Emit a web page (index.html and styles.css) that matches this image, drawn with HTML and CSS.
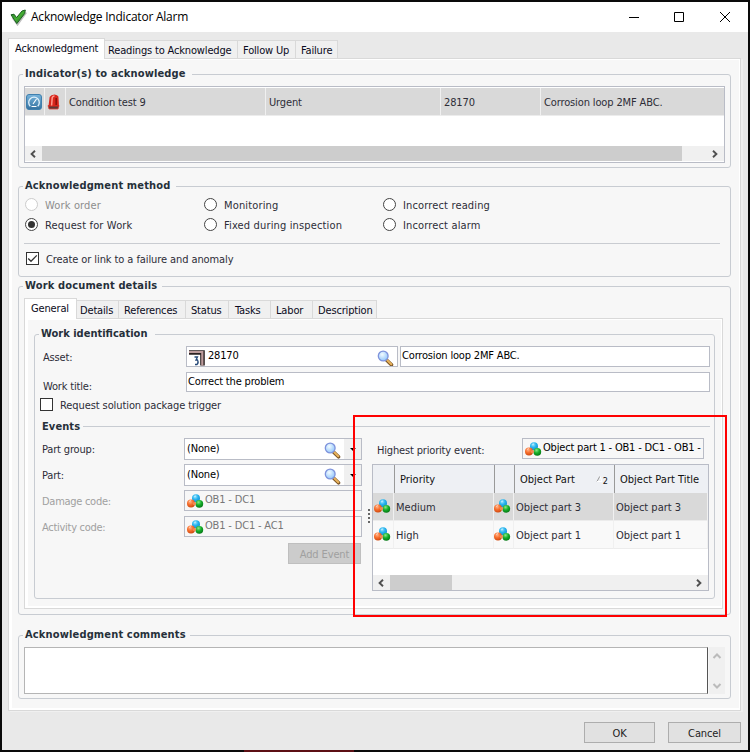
FILE: index.html
```html
<!DOCTYPE html>
<html lang="en">
<head>
<meta charset="utf-8">
<title>Acknowledge Indicator Alarm</title>
<link rel="stylesheet" href="styles.css">
</head>
<body>
<svg class="defs" width="0" height="0">
  <defs>
    <radialGradient id="gO" cx=".4" cy=".3" r=".7"><stop offset="0" stop-color="#ffb48a"/><stop offset=".5" stop-color="#f8702e"/><stop offset="1" stop-color="#d04a10"/></radialGradient>
    <radialGradient id="gB" cx=".4" cy=".3" r=".7"><stop offset="0" stop-color="#9be4ff"/><stop offset=".5" stop-color="#27b4ee"/><stop offset="1" stop-color="#1590d4"/></radialGradient>
    <radialGradient id="gG" cx=".4" cy=".3" r=".7"><stop offset="0" stop-color="#8be88a"/><stop offset=".5" stop-color="#16b02a"/><stop offset="1" stop-color="#067a16"/></radialGradient>
    <radialGradient id="gL" cx=".4" cy=".35" r=".7"><stop offset="0" stop-color="#f2fbff"/><stop offset="1" stop-color="#8cc3fb"/></radialGradient>
    <linearGradient id="gGauge" x2="0" y2="1"><stop offset="0" stop-color="#78b4dc"/><stop offset="1" stop-color="#34719f"/></linearGradient>
    <linearGradient id="gCheck" x2="1" y2="1"><stop offset="0" stop-color="#1f7a28"/><stop offset=".5" stop-color="#46b034"/><stop offset="1" stop-color="#14581c"/></linearGradient>
    <symbol id="parts" viewBox="0 0 17 15">
      <circle cx="9" cy="4.3" r="4" fill="url(#gB)"/>
      <circle cx="12.300" cy="9.800" r="3.900" fill="url(#gG)"/>
      <circle cx="4" cy="9.400" r="4" fill="url(#gO)"/>
      <circle cx="7.400" cy="9.600" r="1.700" fill="#f08a54"/>
      <path d="M2 7.600l2-1.300M7 3l2-1.200" stroke="#fff" stroke-opacity=".6" stroke-width=".8"/>
    </symbol>
    <symbol id="lens" viewBox="0 0 17 17">
      <path d="M10 10.500l4.500 4.300" stroke="#7a5425" stroke-width="3.600" stroke-linecap="round"/>
      <path d="M10.300 10.200l4 4" stroke="#e9b35c" stroke-width="2" stroke-linecap="round"/>
      <circle cx="6.200" cy="6" r="4.900" fill="url(#gL)" stroke="#7f93dc" stroke-width="1.300"/>
    </symbol>
    <symbol id="left" viewBox="0 0 8 8"><path d="M6 .8L2.600 4L6 7.200" fill="none" stroke="#505050" stroke-width="1.900"/></symbol>
    <symbol id="right" viewBox="0 0 8 8"><path d="M2 .8L5.400 4L2 7.200" fill="none" stroke="#505050" stroke-width="1.900"/></symbol>
  </defs>
</svg>

<div class="window">
  <header class="titlebar">
    <svg class="logo" width="17" height="17" viewBox="0 0 17 17"><path d="M2.500 8.500l5 7L16.200 3.500" fill="none" stroke="#888" stroke-opacity=".55" stroke-width="2"/><path d="M1 5.800L4 5.200L6.600 8.600L12 2L15.300 1L14.600 4.600L6.800 14.600Z" fill="url(#gCheck)" stroke="#1b5e20" stroke-width="1"/></svg>
    <h1>Acknowledge Indicator Alarm</h1>
    <svg class="controls" width="104" height="12" viewBox="0 0 104 12"><path d="M1 6.500h10M46.500 1.500h9v9h-9zM92 1l10 10M102 1L92 11" fill="none" stroke="#000"/></svg>
  </header>

  <nav class="tabs main-tabs">
    <span class="tab active t-ack">Acknowledgment</span><span class="tab t-read">Readings to Acknowledge</span><span class="tab t-follow">Follow Up</span><span class="tab t-fail">Failure</span>
  </nav>

  <main class="page">
    <fieldset class="group g-ind">
      <legend class="l-ind">Indicator(s) to acknowledge</legend>
      <div class="grid ind-grid">
        <div class="row selected ind-row">
          <span class="cell ic"><svg width="16" height="16" viewBox="0 0 16 16"><rect x=".5" y=".5" width="15" height="15" rx="2.500" fill="url(#gGauge)" stroke="#3f7fae"/><path d="M4.300 12.200A5.300 5.300 0 1 1 11.700 12.200" fill="none" stroke="#dff0fb" stroke-width="1.300"/><path d="M7 10L10.500 5M5.500 12.500h5" stroke="#fff" stroke-width="1.100"/></svg></span>
          <span class="cell ic"><svg width="14" height="16" viewBox="0 0 14 16"><path d="M1 11.500h11l-1 3.500h-9z" fill="#5a3a38" stroke="#e04038" stroke-width=".8"/><path d="M1.500 12.500L2.600 3Q4 .4 7.500 .4Q10.600 .6 11.400 2.600L12 12.500Z" fill="#d8261c"/><path d="M4.600 11.500L5.200 3.600Q6 2 7.500 2" stroke="#ff9a8e" stroke-width="1.500" fill="none"/><path d="M9.200 4v7" stroke="#8c100a" stroke-width="1.600"/></svg></span>
          <span class="cell">Condition test 9</span><span class="cell">Urgent</span><span class="cell">28170</span><span class="cell">Corrosion loop 2MF ABC.</span>
        </div>
        <div class="spacer"></div>
        <div class="hscroll"><svg width="8" height="8"><use href="#left"/></svg><i class="thumb"></i><svg width="8" height="8"><use href="#right"/></svg></div>
      </div>
    </fieldset>

    <fieldset class="group g-method">
      <legend class="l-method">Acknowledgment method</legend>
      <div class="radios">
        <label class="off"><i class="radio"></i><span>Work order</span></label>
        <label><i class="radio"></i><span>Monitoring</span></label>
        <label><i class="radio"></i><span>Incorrect reading</span></label>
        <label><i class="radio on"></i><span>Request for Work</span></label>
        <label><i class="radio"></i><span>Fixed during inspection</span></label>
        <label><i class="radio"></i><span>Incorrect alarm</span></label>
      </div>
      <div class="rule"></div>
      <label class="check"><i class="box"><svg width="11" height="11" viewBox="0 0 11 11"><path d="M1.200 5.500L4 8.300L9.800 2.400" fill="none" stroke="#333" stroke-width="1.300"/></svg></i><span>Create or link to a failure and anomaly</span></label>
    </fieldset>

    <fieldset class="group g-doc">
      <legend class="l-doc">Work document details</legend>
      <nav class="tabs doc-tabs">
        <span class="tab active d1">General</span><span class="tab d2">Details</span><span class="tab d3">References</span><span class="tab d4">Status</span><span class="tab d5">Tasks</span><span class="tab d6">Labor</span><span class="tab d7">Description</span>
      </nav>
      <div class="page doc-page">
        <fieldset class="group g-work">
          <legend class="l-work">Work identification</legend>
          <div class="line asset">
            <span class="lab">Asset:</span>
            <span class="field f-asset"><svg width="17" height="17" viewBox="0 0 17 17"><path d="M0 3.500h13.500v13" fill="none" stroke="#2b2222" stroke-width="4.600"/><path d="M0 3h13.300v13.500" fill="none" stroke="#bd9c9c" stroke-width="2.200"/><path d="M5.500 8h3l-1.500 3h1.500q1.500 3-.5 4.500H6" fill="none" stroke="#274a78" stroke-width="1.300"/></svg><b>28170</b><svg class="end" width="17" height="17"><use href="#lens"/></svg></span>
            <span class="field f-desc">Corrosion loop 2MF ABC.</span>
          </div>
          <div class="line title"><span class="lab">Work title:</span><span class="field f-title">Correct the problem</span></div>
          <label class="check c-req"><i class="box"></i><span>Request solution package trigger</span></label>
          <div class="subhead"><h2>Events</h2><i></i></div>
          <div class="events">
            <div class="left">
              <div class="line"><span class="lab">Part group:</span><span class="field combo">(None)<svg class="end" width="17" height="17"><use href="#lens"/></svg><i class="drop"></i></span></div>
              <div class="line"><span class="lab">Part:</span><span class="field combo">(None)<svg class="end" width="17" height="17"><use href="#lens"/></svg><i class="drop"></i></span></div>
              <div class="line off"><span class="lab">Damage code:</span><span class="field ro"><svg width="17" height="15"><use href="#parts"/></svg><b>OB1 - DC1</b></span></div>
              <div class="line off"><span class="lab">Activity code:</span><span class="field ro"><svg width="17" height="15"><use href="#parts"/></svg><b>OB1 - DC1 - AC1</b></span></div>
              <button class="btn add" disabled>Add Event</button>
            </div>
            <div class="splitter"><i></i><i></i><i></i><i></i></div>
            <div class="right">
              <div class="highest"><span>Highest priority event:</span><span class="field f-high"><svg width="17" height="15"><use href="#parts"/></svg><b>Object part 1 - OB1 - DC1 - OB1 -</b></span></div>
              <div class="grid ev-grid">
                <div class="row head"><span></span><span>Priority</span><span></span><span>Object Part<svg class="sort" width="7" height="9" viewBox="0 0 7 9"><path d="M1 6.500L4 1" stroke="#999" fill="none"/><path d="M4 1L6 6.500H1" stroke="#fff" fill="none"/></svg><small>2</small></span><span>Object Part Title</span></div>
                <div class="row selected"><span class="cell ic"><svg width="17" height="15"><use href="#parts"/></svg></span><span class="cell">Medium</span><span class="cell ic"><svg width="17" height="15"><use href="#parts"/></svg></span><span class="cell">Object part 3</span><span class="cell">Object part 3</span></div>
                <div class="row alt"><span class="cell ic"><svg width="17" height="15"><use href="#parts"/></svg></span><span class="cell">High</span><span class="cell ic"><svg width="17" height="15"><use href="#parts"/></svg></span><span class="cell">Object part 1</span><span class="cell">Object part 1</span></div>
                <div class="spacer"></div>
                <div class="hscroll"><svg width="8" height="8"><use href="#left"/></svg><i class="thumb"></i><svg width="8" height="8"><use href="#right"/></svg></div>
              </div>
            </div>
          </div>
        </fieldset>
      </div>
    </fieldset>

    <fieldset class="group g-com">
      <legend class="l-com">Acknowledgment comments</legend>
      <div class="comments"><div class="memo"></div><div class="vscroll"><svg width="10" height="8" viewBox="0 0 10 8"><path d="M1.500 6L5 2.500L8.500 6" fill="none" stroke="#bbb" stroke-width="2"/></svg><svg width="10" height="8" viewBox="0 0 10 8"><path d="M1.500 2L5 5.500L8.500 2" fill="none" stroke="#bbb" stroke-width="2"/></svg></div></div>
    </fieldset>
  </main>

  <footer class="footer"><button class="btn ok">OK</button><button class="btn cancel">Cancel</button></footer>
</div>
<div class="highlight"></div>
</body>
</html>
```
FILE: styles.css
```css
* { box-sizing: border-box; }
html { background: #0a0a0a; }
body {
  margin: 0; width: 750px; height: 752px; padding: 2px; position: relative; overflow: hidden;
  background: linear-gradient(90deg, transparent 244px, #5c0f14 244px, #5c0f14 354px, transparent 354px) 0 100% / 100% 2px no-repeat;
  font: 11px/14px "DejaVu Sans Condensed", "DejaVu Sans", sans-serif; font-stretch: condensed;
  letter-spacing: -.13px;
  color: #2d2d37;
}
.defs { position: absolute; }
svg { display: block; flex: none; }
i { font-style: normal; display: block; }
b { font-weight: normal; }
.window { width: 746px; height: 748px; background: #e9e9e9; display: flex; flex-direction: column; }
.titlebar { height: 30px; background: #fff; display: flex; align-items: center; padding: 0 16px 0 8px; }
.titlebar h1 { margin: 0 0 0 4px; font: 12px/16px "Open Sans", "Noto Sans", sans-serif; letter-spacing: -.23px; color: #000; }
.controls { margin-left: auto; }

.tabs { display: flex; align-items: flex-end; color: #0a0a20; white-space: nowrap; letter-spacing: -.16px; }
.tab { height: 18px; background: #f0f0f0; border: 1px solid #d9d9d9; border-left: 0; border-bottom: 0; padding: 3px 0 0 3px; }
.tab.active { height: 21px; margin-bottom: -1px; background: #fff; border-left: 1px solid #d9d9d9; padding: 3px 0 0 6px; z-index: 1; }
.main-tabs { height: 26px; margin-left: 6px; }
.t-ack { width: 97px; } .t-read { width: 133px; } .t-follow { width: 58px; padding-left: 5px; } .t-fail { width: 42px; padding-left: 5px; }
.page { background: #f7f7f7; border: 1px solid #d9d9d9; box-shadow: inset 3px 0 #fff, inset 0 1px #fff, inset -1px -2px #fff; }
main.page { width: 733px; height: 653px; margin-left: 6px; padding: 8px 9px 0 9px; box-shadow: inset 3px 0 #fff, inset 0 1px #fff, inset -1px -2px #fff, 2px 1px #f0f0f0; }

.group { border: 1px solid #c8ccd2; border-radius: 3px; margin: 0; padding: 0 0 0 5px; min-width: 0; }
legend { font-weight: bold; line-height: 14px; padding: 0 0 0 2px; margin-left: -1px; color: #26303a; white-space: nowrap; height: 14px; letter-spacing: .15px; }
.g-ind { height: 101px; } .g-method { height: 98px; margin-top: 11px; } .g-doc { height: 336px; margin-top: 2px; } .g-com { height: 71px; margin-top: 13px; }
.l-ind { width: 169px; } .l-method { width: 153px; } .l-doc { width: 139px; } .l-work { width: 116px; } .l-com { width: 167px; }
.l-work { letter-spacing: 0; }

.grid { border: 1px solid #b9bcc6; background: #fff; display: flex; flex-direction: column; }
.spacer { flex: 1; }
.row { display: grid; height: 28px; white-space: nowrap; }
.selected { background: #d9d9d9; }
.alt { background: #f9f9f9; }
.cell { border-right: 1px solid #f0f0f0; border-bottom: 1px solid #ececec; padding: 8px 0 0 3px; overflow: hidden; }
.cell.ic { padding: 6px 0 0 1px; }
.ind-grid { width: 701px; height: 77px; margin-top: 5px; padding-top: 1px; }
.ind-row { grid-template-columns: 20px 21px 200px 175px 100px 1fr; }
.ind-row .cell:last-child { border-right: 0; }
.ind-row .cell.ic + .ic { padding-left: 2px; }
.hscroll { height: 15px; background: #f0f0f0; display: flex; align-items: center; padding: 0 5px 0 4px; }
.ind-grid .hscroll { margin-bottom: 1px; }
.hscroll svg:last-child { margin-left: auto; }
.thumb { height: 15px; background: #cdcdcd; margin-left: 5px; width: 640px; }

.radios { display: grid; grid-template-columns: 179px 179px 1fr; grid-auto-rows: 20px; margin-top: 2px; padding-left: 1px; letter-spacing: .15px; }
.radios label { display: flex; align-items: flex-start; padding-top: 3px; gap: 7px; }
.radios span, .check span { padding-top: 1px; }
.radio { width: 13px; height: 13px; border: 1px solid #444; border-radius: 50%; background: #fff; display: grid; place-items: center; }
.on::after { content: ""; width: 7px; height: 7px; border-radius: 50%; background: #333; }
.off { color: #8d8d8d; }
.off .radio { border-color: #ccc; }
.rule { height: 1px; width: 696px; background: #c9ccd1; margin-top: 8px; }
.check { display: flex; align-items: flex-start; gap: 7px; margin: 8px 0 0 2px; height: 13px; letter-spacing: -.09px; }
.box { width: 13px; height: 13px; border: 1px solid #333; background: #fff; }

.doc-tabs { height: 25px; }
.d1 { width: 53px; } .d2 { width: 42px; } .d3 { width: 67px; padding-left: 5px; } .d4 { width: 43px; padding-left: 5px; } .d5 { width: 42px; padding-left: 6px; } .d6 { width: 42px; padding-left: 5px; } .d7 { width: 64px; padding-left: 5px; }
.doc-page { width: 699px; height: 291px; padding: 8px 8px 8px 9px; }
.g-work { width: 681px; height: 272px; padding: 0 4px 0 5px; }
.line { display: flex; }
.lab { flex: none; letter-spacing: -.17px; }
.field { display: flex; border: 1px solid #b9bcc6; background: #fff; height: 21px; padding: 2px 0 0 2px; color: #000; overflow: hidden; white-space: nowrap; flex: none; letter-spacing: -.17px; }
.field .end { margin: 1px 0 0 auto; }
.asset { margin-top: 5px; padding-left: 3px; }
.asset .lab { width: 143px; padding-top: 5px; }
.f-asset { width: 212px; padding-right: 3px; }
.f-asset b { margin-left: 2px; }
.f-desc { width: 310px; margin-left: 2px; padding-left: 1px; }
.title { margin-top: 5px; padding-left: 3px; }
.title .lab { width: 143px; padding-top: 8px; }
.f-title { width: 524px; height: 20px; padding-left: 1px; }
.c-req { margin: 4px 0 0 0; }
.subhead { display: flex; align-items: center; height: 14px; margin: 8px 0 0 2px; }
.subhead h2 { margin: 0; font-size: 11px; line-height: 14px; padding-top: 1px; height: 14px; width: 41px; color: #26303a; letter-spacing: .1px; }
.subhead i { height: 1px; width: 627px; background: #c8ccd2; }
.events { display: flex; margin-top: 5px; }
.left { width: 322px; padding-left: 2px; }
.left .line { height: 26px; }
.left .lab { width: 142px; padding-top: 5px; }
.left .off .lab { letter-spacing: -.28px; }
.combo { width: 178px; height: 22px; padding: 3px 0 0 2px; }
.combo .end { margin-top: 0; }
.drop { width: 17px; height: 20px; margin: -3px 0 0 3px; background: #f0f0f0; display: grid; place-items: center; }
.drop::after { content: ""; border: 3px solid transparent; border-top-color: #000; border-bottom: 0; }
.ro { width: 178px; background: #f7f7f7; color: #777; }
.ro svg, .f-high svg { margin-top: 1px; }
.ro b, .f-high b { margin-left: 1px; }
.off .lab { color: #a0a0a0; }
.btn { font: inherit; letter-spacing: -.13px; color: #222; background: #e1e1e1; border: 1px solid #adadad; height: 21px; padding: 2px 0 0; }
.add { display: block; width: 73px; background: #ccc; border-color: #bfbfbf; color: #a0a0a0; margin: 1px 0 0 246px; }
.splitter { width: 10px; padding: 71px 0 0 6px; }
.splitter i { width: 2px; height: 2px; background: #666; margin-bottom: 2px; }
.right { width: 337px; }
.highest { display: flex; height: 26px; }
.highest > span:first-child { width: 150px; padding: 6px 0 0 5px; white-space: nowrap; letter-spacing: -.17px; }
.f-high { width: 182px; background: #f7f7f7; }
.f-high b { letter-spacing: -.19px; }
.ev-grid { width: 337px; height: 127px; letter-spacing: 0; }
.ev-grid .row { grid-template-columns: 21px 100px 20px 100px 1fr; }
.ev-grid .row.head { grid-template-columns: 22px 100px 20px 100px 1fr; }
.ev-grid .cell { padding-left: 2px; }
.ev-grid .cell.ic { padding-left: 0; }
.ev-grid .cell.ic:first-child { padding-left: 1px; }
.head { background: #eef0f4; color: #111; }
.head span { border-right: 1px solid #999; padding: 8px 0 0 5px; display: flex; }
.head span:last-child { border-right: 0; }
.sort { margin: 2px 0 0 auto; }
.head small { font-size: 9px; margin-right: 6px; padding-top: 1px; }
.ev-grid .thumb { width: 62px; }

.comments { display: flex; margin-top: 5px; }
.memo { width: 684px; height: 47px; background: #fff; border: 1px solid #b5b5b5; border-right-color: #555; }
.vscroll { width: 16px; height: 47px; margin-left: 1px; background: #f0f0f0; display: flex; flex-direction: column; justify-content: space-between; align-items: center; padding: 5px 0 4px; }
.footer { display: flex; justify-content: flex-end; gap: 13px; padding: 11px 7px 0 0; }
.ok { width: 71px; } .cancel { width: 73px; }
.highlight { position: absolute; left: 353px; top: 415px; width: 374px; height: 202px; border: 2px solid #f00; }
```
